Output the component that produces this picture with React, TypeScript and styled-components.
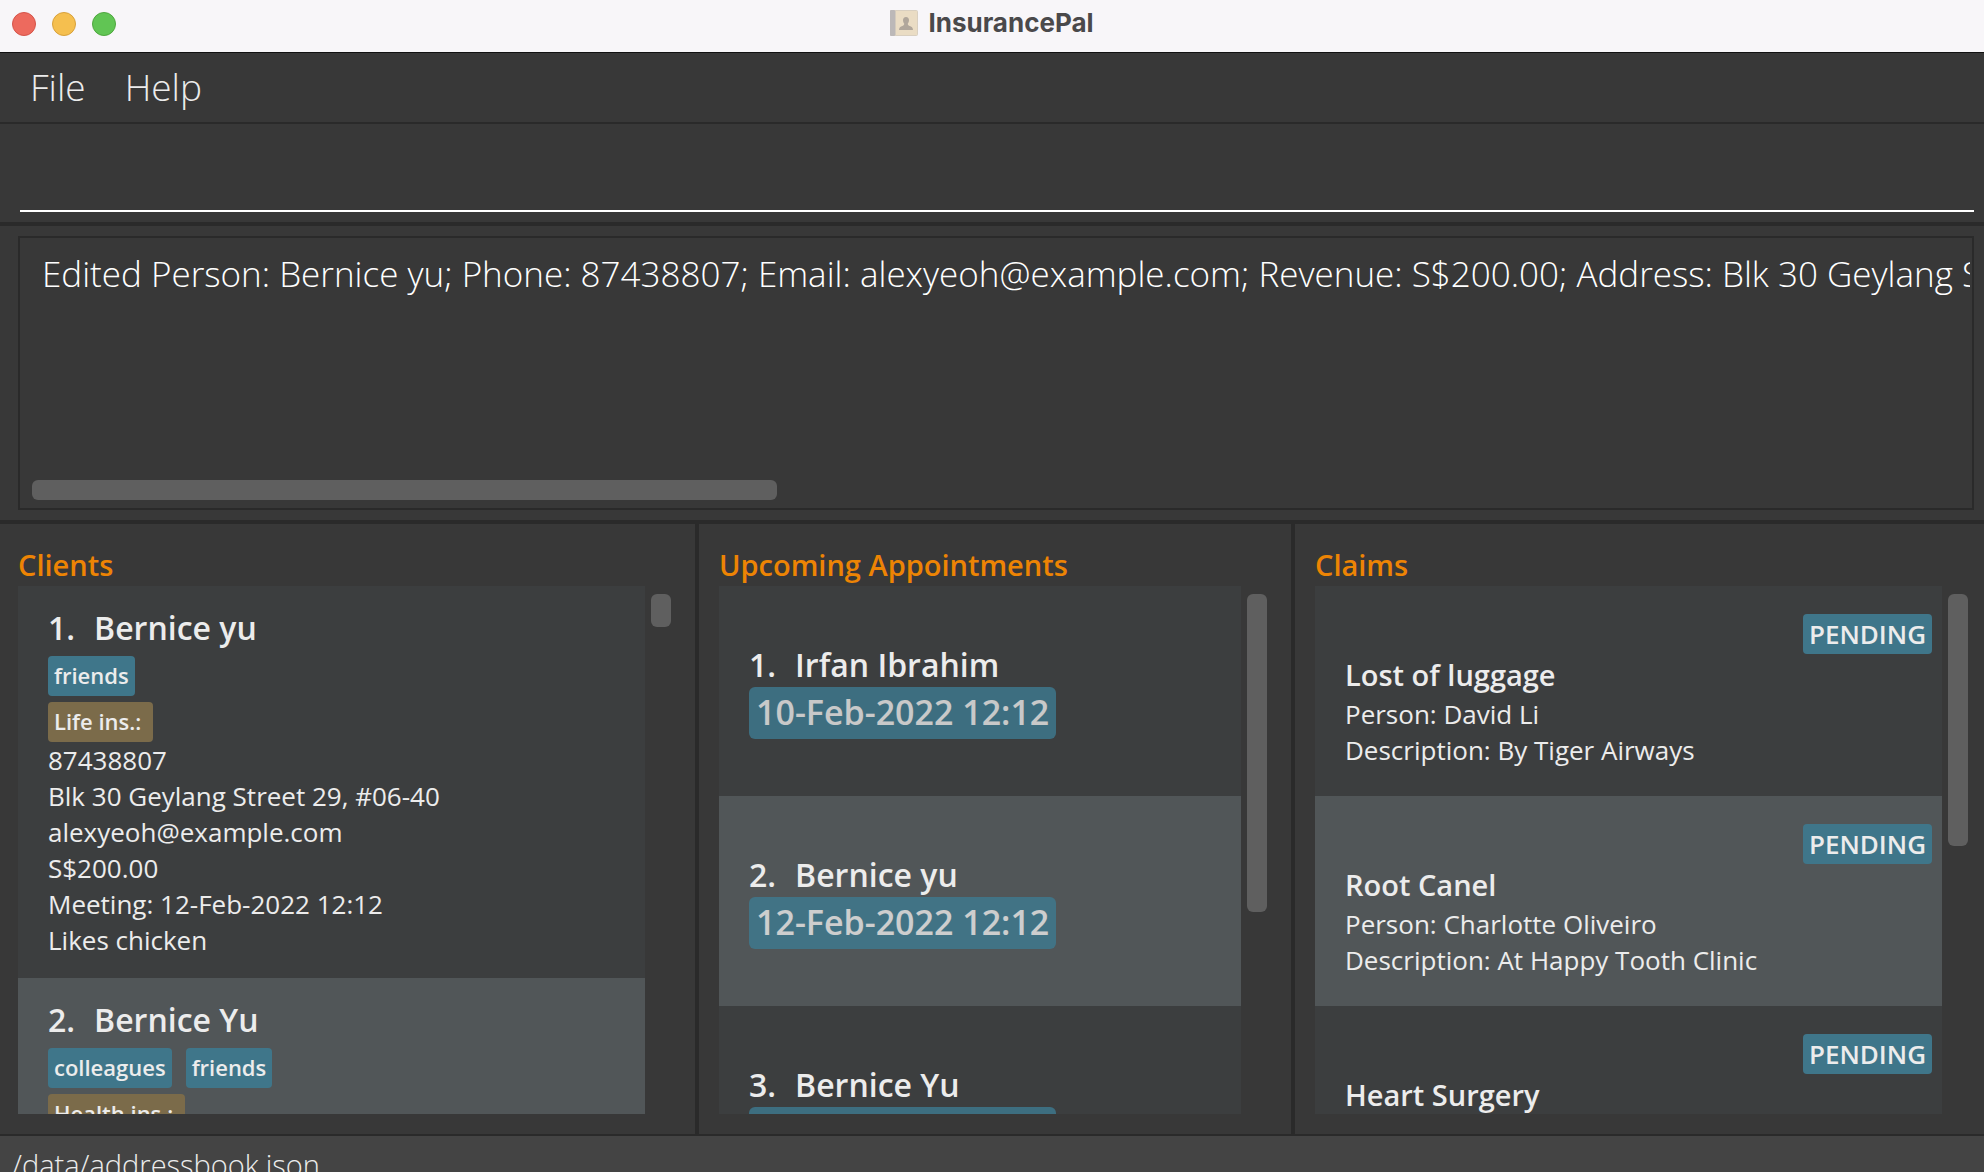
import React from "react";
import styled, { createGlobalStyle } from "styled-components";

const GlobalStyle = createGlobalStyle`
  *, *::before, *::after { box-sizing: border-box; }
  body { margin: 0; background: #383838; }
  h1, h2, h3, p, ul, ol { margin: 0; padding: 0; font-weight: inherit; }
  ul, ol { list-style: none; }
`;

const Window = styled.div`
  display: flex;
  flex-direction: column;
  height: 100vh;
  overflow: hidden;
  background: #383838;
  color: #ececec;
  font-family: "Open Sans", "Noto Sans", sans-serif;
`;

const TitleBar = styled.header`
  display: grid;
  grid-template-columns: 1fr auto 1fr;
  align-items: center;
  flex: none;
  height: 53px;
  padding: 0 12px 4px;
  background: #f8f6f9;
  border-bottom: 1px solid #111;
`;

const Lights = styled.div`
  display: flex;
  gap: 16px;
`;

const Light = styled.button<{ $fill: string; $edge: string }>`
  width: 24px;
  height: 24px;
  padding: 0;
  border: 1px solid ${(p) => p.$edge};
  border-radius: 50%;
  background: ${(p) => p.$fill};
`;

const Title = styled.h1`
  display: flex;
  align-items: center;
  gap: 10px;
  padding-bottom: 2px;
  color: #4a494b;
  font: 700 26px/32px Inter, sans-serif;
`;

const MenuBar = styled.nav`
  display: flex;
  flex: none;
  gap: 39px;
  height: 71px;
  padding: 9px 30px 10px;
  border-bottom: 2px solid #2a2a2a;
`;

const MenuButton = styled.button`
  padding: 0;
  border: 0;
  background: none;
  color: #ececec;
  font: 300 37px/50px "Open Sans", sans-serif;
`;

const CommandPane = styled.form`
  flex: none;
  padding: 10px 10px 10px 20px;
  border-bottom: 4px solid #2a2a2a;
`;

const CommandInput = styled.input`
  display: block;
  width: 100%;
  height: 78px;
  padding: 0;
  border: 0;
  border-bottom: 2px solid #fff;
  outline: 0;
  background: transparent;
  color: #fff;
  font: 300 35px/48px "Open Sans", sans-serif;
`;

const ResultPane = styled.section`
  flex: none;
  padding: 10px 10px 10px 18px;
  border-bottom: 4px solid #2a2a2a;
`;

const ResultBox = styled.div`
  display: flex;
  flex-direction: column;
  height: 274px;
  padding: 10px 2px 8px 12px;
  border: 2px solid #2a2a2a;
`;

const ResultText = styled.textarea`
  display: block;
  flex: 1;
  width: 100%;
  padding: 2px 0 0 10px;
  border: 0;
  outline: 0;
  resize: none;
  overflow: hidden;
  white-space: pre;
  background: transparent;
  color: #fff;
  font: 300 35px/48px "Open Sans", sans-serif;
`;

const HorizontalThumb = styled.div`
  width: calc(100% * 5 / 13);
  height: 20px;
  border-radius: 6px;
  background: #5f5f5f;
`;

const Columns = styled.main`
  display: grid;
  grid-template-columns: 695fr 592fr 689fr;
  gap: 4px;
  flex: 1;
  min-height: 0;
  background: #2a2a2a;
  border-bottom: 2px solid #2a2a2a;
`;

const Panel = styled.section<{ $left: number; $right: number }>`
  display: flex;
  flex-direction: column;
  min-width: 0;
  min-height: 0;
  padding: 20px ${(p) => p.$right}px 20px ${(p) => p.$left}px;
  background: #383838;
`;

const PanelTitle = styled.h2`
  flex: none;
  color: #ed8404;
  font-size: 29px;
  font-weight: 600;
  line-height: 42px;
`;

const ListArea = styled.div`
  display: flex;
  gap: 6px;
  flex: 1;
  min-height: 0;
`;

const List = styled.ol`
  flex: 1;
  min-width: 0;
  overflow: hidden;
  background: #3c3e3f;
`;

const Track = styled.div`
  flex: none;
  width: 20px;
  padding-top: 8px;
`;

const VerticalThumb = styled.div<{ $length: number }>`
  height: ${(p) => p.$length}px;
  border-radius: 6px;
  background: #5f5f5f;
`;

const Card = styled.li`
  display: flex;
  flex-direction: column;
  background: #3c3e3f;
  &:nth-child(even) { background: #515658; }
`;

const ClientCard = styled(Card)`
  padding: 20px 30px;
`;

const AppointmentCard = styled(Card)`
  align-items: flex-start;
  justify-content: center;
  height: 210px;
  padding: 0 30px;
`;

const ClaimCard = styled(Card)`
  height: 210px;
  padding: 28px 10px 28px 30px;
`;

const Name = styled.h3`
  display: flex;
  gap: 19px;
  font-size: 32px;
  font-weight: 600;
  line-height: 44px;
`;

const ClaimTitle = styled.h3`
  font-size: 29px;
  font-weight: 600;
  line-height: 42px;
`;

const Detail = styled.p`
  font-size: 26px;
  line-height: 36px;
  white-space: nowrap;
`;

const Tags = styled.div`
  display: flex;
  gap: 14px;
  padding-top: 6px;
`;

const Tag = styled.span<{ $kind?: "insurance" }>`
  padding: 0 6px 2px;
  border-radius: 4px;
  background: ${(p) => (p.$kind === "insurance" ? "#7b6b4a" : "#3f768a")};
  font-size: 22px;
  font-weight: 600;
  line-height: 38px;
  white-space: pre;
`;

const Status = styled(Tag)`
  align-self: flex-end;
  padding: 0 6px;
  font-size: 26px;
  line-height: 40px;
`;

const DateTag = styled.time`
  padding: 0 7px 2px;
  border-radius: 6px;
  background: #3e7b91;
  color: #ececec;
  opacity: 0.8;
  font-size: 34px;
  font-weight: 600;
  line-height: 50px;
`;

const StatusBar = styled.footer`
  flex: none;
  height: 36px;
  padding: 8px 12px 0;
  overflow: hidden;
  background: #444;
  font-size: 29px;
  font-weight: 300;
  line-height: 42px;
`;

const AddressBookIcon = () => (
  <svg width="28" height="26" viewBox="0 0 28 26" aria-hidden="true">
    <rect x="0" y="0" width="28" height="26" rx="2" fill="#d9cfc0" />
    <rect x="0" y="0" width="5" height="26" rx="1" fill="#bcb8b8" />
    <rect x="5" y="1" width="1" height="24" fill="#d3cabd" />
    <rect x="6" y="1" width="21" height="24" fill="#eadcc4" />
    <path
      d="M16 7c2 0 3 1.300 3 3.200 0 1.500-.7 2.500-1.200 3.300 0 1.500.4 1.900 1.800 2.500 2 .8 3.400 1.400 3.400 4H9c0-2.600 1.400-3.200 3.400-4 1.400-.6 1.800-1 1.800-2.500-.5-.8-1.200-1.800-1.200-3.300C13 8.300 14 7 16 7z"
      fill="#b0a69b"
    />
  </svg>
);

const lights = [
  { label: "Close", fill: "#ed6a5e", edge: "#d5544a" },
  { label: "Minimize", fill: "#f5bf4f", edge: "#d8a13c" },
  { label: "Zoom", fill: "#61c554", edge: "#4fa73f" },
];

const clients = [
  {
    name: "Bernice yu",
    tags: ["friends"],
    insurances: ["Life ins.: "],
    details: [
      "87438807",
      "Blk 30 Geylang Street 29, #06-40",
      "alexyeoh@example.com",
      "S$200.00",
      "Meeting: 12-Feb-2022 12:12",
      "Likes chicken",
    ],
  },
  {
    name: "Bernice Yu",
    tags: ["colleagues", "friends"],
    insurances: ["Health ins.: "],
    details: [],
  },
];

const appointments = [
  { name: "Irfan Ibrahim", date: "10-Feb-2022 12:12" },
  { name: "Bernice yu", date: "12-Feb-2022 12:12" },
  { name: "Bernice Yu", date: "12-Feb-2022 12:12" },
];

const claims = [
  { title: "Lost of luggage", person: "David Li", description: "By Tiger Airways" },
  { title: "Root Canel", person: "Charlotte Oliveiro", description: "At Happy Tooth Clinic" },
  { title: "Heart Surgery", person: "", description: "" },
];

const result =
  "Edited Person: Bernice yu; Phone: 87438807; Email: alexyeoh@example.com; Revenue: S$200.00; Address: Blk 30 Geylang Street 29, #06-40";

export default function App() {
  return (
    <>
      <GlobalStyle />
      <Window>
        <TitleBar>
          <Lights>
            {lights.map((l) => (
              <Light key={l.label} type="button" aria-label={l.label} $fill={l.fill} $edge={l.edge} />
            ))}
          </Lights>
          <Title>
            <AddressBookIcon />
            InsurancePal
          </Title>
        </TitleBar>
        <MenuBar>
          <MenuButton type="button">File</MenuButton>
          <MenuButton type="button">Help</MenuButton>
        </MenuBar>
        <CommandPane onSubmit={(e) => e.preventDefault()}>
          <CommandInput type="text" aria-label="Command" />
        </CommandPane>
        <ResultPane>
          <ResultBox>
            <ResultText aria-label="Result" readOnly wrap="off" value={result} />
            <HorizontalThumb />
          </ResultBox>
        </ResultPane>
        <Columns>
          <Panel $left={18} $right={24}>
            <PanelTitle>Clients</PanelTitle>
            <ListArea>
              <List>
                {clients.map((c, i) => (
                  <ClientCard key={c.name}>
                    <Name>
                      <span>{i + 1}.</span>
                      <span>{c.name}</span>
                    </Name>
                    <Tags>
                      {c.tags.map((t) => (
                        <Tag key={t}>{t}</Tag>
                      ))}
                    </Tags>
                    <Tags>
                      {c.insurances.map((t) => (
                        <Tag key={t} $kind="insurance">{t}</Tag>
                      ))}
                    </Tags>
                    {c.details.map((d) => (
                      <Detail key={d}>{d}</Detail>
                    ))}
                  </ClientCard>
                ))}
              </List>
              <Track>
                <VerticalThumb $length={33} />
              </Track>
            </ListArea>
          </Panel>
          <Panel $left={20} $right={24}>
            <PanelTitle>Upcoming Appointments</PanelTitle>
            <ListArea>
              <List>
                {appointments.map((a, i) => (
                  <AppointmentCard key={a.name}>
                    <Name>
                      <span>{i + 1}.</span>
                      <span>{a.name}</span>
                    </Name>
                    <DateTag>{a.date}</DateTag>
                  </AppointmentCard>
                ))}
              </List>
              <Track>
                <VerticalThumb $length={318} />
              </Track>
            </ListArea>
          </Panel>
          <Panel $left={20} $right={16}>
            <PanelTitle>Claims</PanelTitle>
            <ListArea>
              <List>
                {claims.map((c) => (
                  <ClaimCard key={c.title}>
                    <Status>PENDING</Status>
                    <ClaimTitle>{c.title}</ClaimTitle>
                    {c.person && <Detail>Person: {c.person}</Detail>}
                    {c.description && <Detail>Description: {c.description}</Detail>}
                  </ClaimCard>
                ))}
              </List>
              <Track>
                <VerticalThumb $length={252} />
              </Track>
            </ListArea>
          </Panel>
        </Columns>
        <StatusBar>/data/addressbook.json</StatusBar>
      </Window>
    </>
  );
}
